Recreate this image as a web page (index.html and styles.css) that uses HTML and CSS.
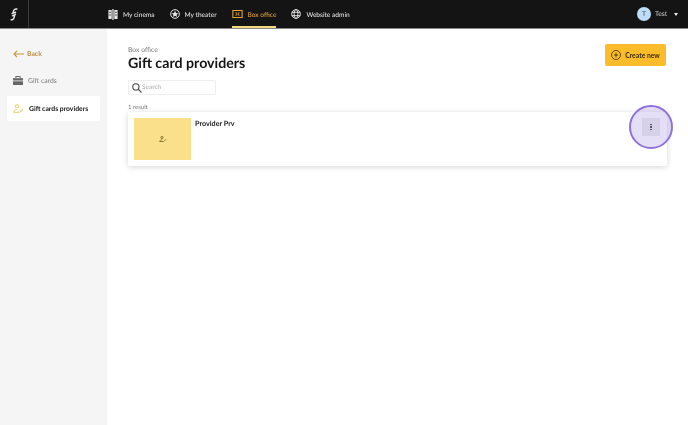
FILE: index.html
```html
<!DOCTYPE html>
<html lang="en">
<head>
  <meta charset="UTF-8" />
  <meta name="viewport" content="width=device-width, initial-scale=1.0" />
  <title>Gift card providers</title>
  <link rel="stylesheet" href="styles.css">
</head>
<body>
  <header class="topbar">
    <div class="logo">
      <svg width="8" height="13" viewBox="0 0 10 16" fill="none" stroke="#e8e8e8" stroke-width="1.800" stroke-linecap="round"><path d="M8.500 1.200C6 .8 4.600 2 4.400 4L3.600 6.500M7 5.200 2.600 7M6.800 7.800 3 9.600M6 8.400 5 12C4.600 14 3 15 1.400 14.600"/></svg>
    </div>
    <nav class="nav">
      <a class="nav-item">
        <svg width="10" height="11" viewBox="0 0 10 12" fill="#e8e8e8"><path d="M0 1h3.600v10H0zM6.400 1H10v10H6.400zM4.300 0h1.400v12H4.300z"/><path fill="#141414" d="M1 3h1.500v1.200H1zM1 6h1.500v1.200H1zM7.500 3H9v1.200H7.500zM7.500 6H9v1.200H7.500z"/></svg>
        My cinema
      </a>
      <a class="nav-item">
        <svg width="10" height="10" viewBox="0 0 12 12"><circle cx="6" cy="6" r="5.200" fill="none" stroke="#e8e8e8" stroke-width="1.200"/><path fill="#e8e8e8" d="m6 2.200 1.200 2.500 2.700.3-2 1.800.6 2.700L6 8.100 3.500 9.500l.6-2.700-2-1.800 2.700-.3z"/></svg>
        My theater
      </a>
      <a class="nav-item active">
        <svg width="11" height="8" viewBox="0 0 13 10" fill="none" stroke="#e0a93a" stroke-width="1.300"><path d="M.7.7h11.600v8.600H.7z"/><path d="M4 3.500h1.500v3H4M9 3.500H7.500v3H9" stroke-width="1"/></svg>
        Box office
      </a>
      <a class="nav-item">
        <svg width="10" height="10" viewBox="0 0 12 12" fill="none" stroke="#e8e8e8" stroke-width="1.100"><circle cx="6" cy="6" r="5.200"/><ellipse cx="6" cy="6" rx="2.400" ry="5.200"/><path d="M1 4h10M1 8h10"/></svg>
        Website admin
      </a>
    </nav>
    <div class="user">
      <span class="avatar">T</span>
      <span class="user-name">Test</span>
      <span class="caret"></span>
    </div>
  </header>

  <div class="layout">
    <aside class="sidebar">
      <a class="back">
        <svg width="11" height="8" viewBox="0 0 11 8" fill="none" stroke="#c9953a" stroke-width="1.100"><path d="M11 4H1M4 .8 1 4l3 3.200"/></svg>
        Back
      </a>
      <a class="side-item">
        <svg width="10" height="9" viewBox="0 0 10 9" fill="#666"><path d="M0 2.200h10V9H0z"/><path fill="none" stroke="#666" d="M2.800 2.200V.5h4.400v1.700"/><path fill="#f5f5f5" d="M0 4.500h10v.8H0z"/></svg>
        Gift cards
      </a>
      <a class="side-item selected">
        <svg width="11" height="9" viewBox="0 0 11 9" fill="none" stroke="#e9d87e" stroke-width="1.200"><circle cx="4" cy="2.300" r="1.700"/><path d="M.5 8.300c.5-2 2-2.800 3.500-2.800M.5 8.300h6M7 8l3-3"/></svg>
        Gift cards providers
      </a>
    </aside>

    <main class="content">
      <div class="page-head">
        <div>
          <div class="crumb">Box office</div>
          <h1>Gift card providers</h1>
        </div>
        <button class="create">
          <svg width="10" height="10" viewBox="0 0 10 10" fill="none" stroke="#3a2c05" stroke-width=".8"><circle cx="5" cy="5" r="4.500"/><path d="M5 2.800v4.400M2.800 5h4.400"/></svg>
          Create new
        </button>
      </div>

      <div class="search">
        <svg width="10" height="10" viewBox="0 0 10 10" fill="none" stroke="#444" stroke-width="1.100"><circle cx="3.900" cy="3.900" r="3.100"/><path d="m6.200 6.200 3.300 3.300"/></svg>
        <span>Search</span>
      </div>

      <div class="count">1 result</div>

      <div class="card">
        <div class="thumb">
          <svg width="8" height="6" viewBox="0 0 11 9" fill="none" stroke="#8a7636" stroke-width="1.500"><circle cx="4" cy="2.300" r="1.700"/><path d="M.5 8.300c.5-2 2-2.800 3.500-2.800M.5 8.300h6M7 8l3-3"/></svg>
        </div>
        <div class="card-title">Provider Prv</div>
        <button class="more">
          <i></i><i></i><i></i>
          <span class="highlight"></span>
        </button>
      </div>
    </main>
  </div>
</body>
</html>
```

FILE: styles.css
```css
* { box-sizing: border-box; }

html, body {
  height: 100%;
}
body {
  margin: 0;
  font-family: Lato, "Noto Sans", Arial, sans-serif;
  font-size: 6.800px;
  text-rendering: geometricPrecision;
  color: #141414;
  background: #fff;
  display: flex;
  flex-direction: column;
  overflow: hidden;
}

.topbar {
  height: 29px;
  flex: none;
  display: flex;
  align-items: stretch;
  background: #141414;
  border-bottom: 1px solid #8a8a8a;
  color: #eee;
  will-change: transform;
}
.logo {
  width: 29px;
  border-right: 1px solid #3a3a3a;
  display: flex;
  align-items: center;
  justify-content: center;
}
.nav {
  display: flex;
  gap: 15px;
  margin-left: 79px;
}
.nav-item {
  display: flex;
  align-items: center;
  gap: 5px;
  height: 28px;
  padding-top: 1px;
  font-size: 6.600px;
  white-space: nowrap;
}
.nav-item svg { margin-top: -1px; }
.nav-item.active {
  color: #e8ab34;
  box-shadow: inset 0 -2px 0 #f6d97a;
}

.user {
  margin-left: auto;
  display: flex;
  align-items: center;
  padding-right: 10px;
}
.avatar {
  width: 14px;
  height: 14px;
  border-radius: 50%;
  background: #bcdcf7;
  color: #35536e;
  display: flex;
  align-items: center;
  justify-content: center;
  margin-right: 4px;
}
.user-name {
  color: #ccc;
  width: 13px;
}
.caret {
  margin-left: 6px;
  border-left: 2.500px solid transparent;
  border-right: 2.500px solid transparent;
  border-top: 3px solid #eee;
}

.layout {
  flex: 1;
  display: flex;
  will-change: transform;
}

.sidebar {
  width: 107px;
  flex: none;
  background: #f5f5f5;
  padding: 16px 7px 0;
}
.back {
  display: flex;
  align-items: center;
  gap: 3px;
  height: 18px;
  padding-left: 6px;
  font-weight: 700;
  color: #b9924a;
}
.side-item {
  display: flex;
  align-items: center;
  gap: 5px;
  height: 25px;
  padding-left: 6px;
  margin-top: 5px;
  color: #777;
  border-radius: 2px;
}
.side-item.selected {
  margin-top: 3px;
  background: #fff;
  color: #141414;
  font-weight: 700;
}

.content {
  flex: 1;
  padding: 17px 21px 0;
  min-width: 0;
}
.page-head {
  display: flex;
  justify-content: space-between;
  align-items: flex-start;
}
.crumb {
  line-height: 9px;
  color: #777;
}
h1 {
  margin: 0;
  font-size: 14.200px;
  line-height: 17px;
  font-weight: 700;
}
.create {
  width: 61px;
  height: 22px;
  margin-top: -2px;
  margin-right: 1px;
  border: 0;
  border-radius: 2px;
  background: #fbbc2c;
  color: #3a2c05;
  font: 700 6.800px Lato, "Noto Sans", Arial, sans-serif;
  display: flex;
  align-items: center;
  justify-content: center;
  gap: 4px;
  white-space: nowrap;
}

.search {
  width: 88px;
  height: 15px;
  margin-top: 8px;
  border: 1px solid #eee;
  border-radius: 1px;
  display: flex;
  align-items: center;
  gap: 0;
  padding-left: 3px;
  color: #aaa;
  font-size: 6.500px;
}

.count {
  margin-top: 9px;
  font-size: 6px;
  line-height: 8px;
  color: #777;
}

.card {
  position: relative;
  height: 54px;
  padding: 6px 7px 6px 6px;
  display: flex;
  gap: 4px;
  background: #fff;
  border-radius: 2px;
  box-shadow: 0 1px 6px rgba(0, 0, 0, .16);
}
.thumb {
  width: 57px;
  height: 42px;
  background: #fbe08c;
  display: flex;
  align-items: center;
  justify-content: center;
}
.card-title {
  font-size: 7.200px;
  font-weight: 700;
  line-height: 11px;
  color: #222;
}

.more {
  position: relative;
  width: 18px;
  height: 18px;
  margin-left: auto;
  padding: 0;
  border: 0;
  background: #eee;
  display: flex;
  flex-direction: column;
  align-items: center;
  justify-content: center;
  gap: 1px;
}
.more i {
  width: 1.500px;
  height: 1.500px;
  background: #333;
  border-radius: 50%;
}
.highlight {
  position: absolute;
  left: -13px;
  top: -13px;
  width: 44px;
  height: 44px;
  border-radius: 50%;
  border: 2px solid #8e72dc;
  background: rgba(124, 92, 214, .2);
}
```
